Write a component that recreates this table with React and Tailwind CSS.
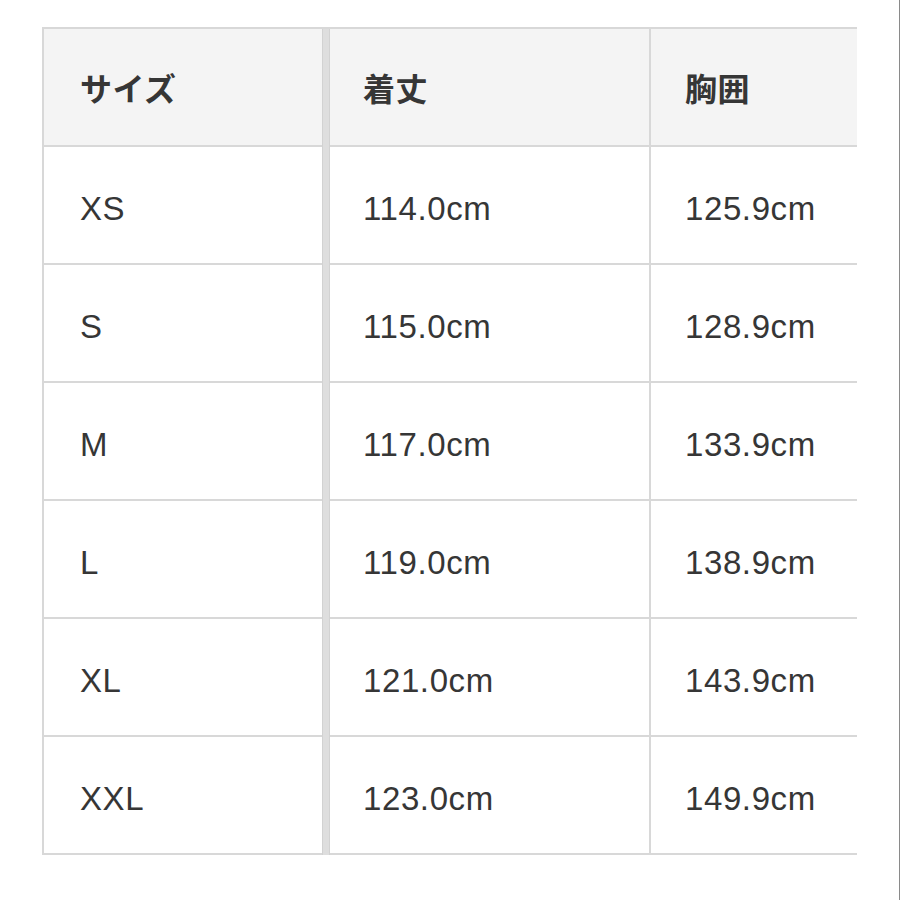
import React from "react";

const rows = [
  ["XS", "114.0cm", "125.9cm"],
  ["S", "115.0cm", "128.9cm"],
  ["M", "117.0cm", "133.9cm"],
  ["L", "119.0cm", "138.9cm"],
  ["XL", "121.0cm", "143.9cm"],
  ["XXL", "123.0cm", "149.9cm"],
];

function Row({ cells, header }) {
  const bg = header ? "bg-[#f4f4f4]" : "bg-white";
  const txt = header
    ? "font-bold text-[32px] tracking-[0.5px]"
    : "text-[33px] tracking-[0.6px]";
  const pad = header ? "pt-[6px]" : "pt-[8px]";
  return (
    <div className="flex h-[118px]">
      <div className={`w-[278px] shrink-0 flex items-center pl-[36px] ${pad} border-b-2 border-[#d8d8d8] ${bg}`}>
        <span className={txt}>{cells[0]}</span>
      </div>
      <div className="w-[8px] shrink-0 bg-[#dedede] border-x border-[#d2d2d2]" />
      <div className={`w-[321px] shrink-0 flex items-center pl-[33px] ${pad} border-b-2 border-r-2 border-[#d8d8d8] ${bg}`}>
        <span className={txt}>{cells[1]}</span>
      </div>
      <div className={`w-[206px] shrink-0 flex items-center pl-[34px] ${pad} border-b-2 border-[#d8d8d8] ${bg}`}>
        <span className={`${txt} whitespace-nowrap`}>{cells[2]}</span>
      </div>
    </div>
  );
}

export default function App() {
  return (
    <div
      className="w-[900px] h-[900px] bg-white border-r border-[#8a8a8a] pl-[42px] pt-[27px] text-[#363636]"
      style={{ fontFamily: '"Liberation Sans", "Noto Sans CJK JP", sans-serif' }}
    >
      <div className="w-[815px] overflow-hidden border-l-2 border-t-2 border-[#d8d8d8]">
        <Row header cells={["サイズ", "着丈", "胸囲"]} />
        {rows.map((r) => (
          <Row key={r[0]} cells={r} />
        ))}
      </div>
    </div>
  );
}
